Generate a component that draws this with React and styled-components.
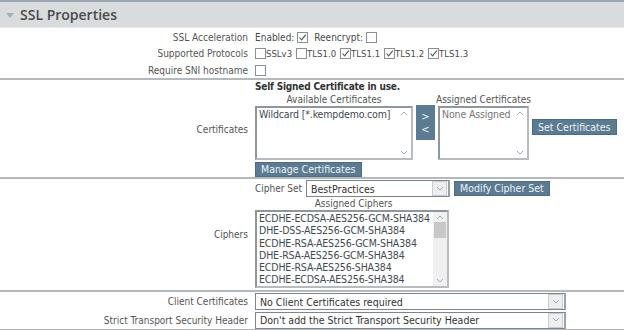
import React from 'react';
import styled, { createGlobalStyle } from 'styled-components';

const Global = createGlobalStyle`
  body {
    margin: 0;
    background: #fff;
    font-family: "DejaVu Sans Condensed", "DejaVu Sans", sans-serif;
    font-size: 10px;
    color: #4a4a4a;
  }
`;

const Panel = styled.div`
  width: 624px;
`;

const Header = styled.div`
  height: 25px;
  border-top: 2px solid #9aa8b3;
  border-bottom: 1px solid #e8ecec;
  background: #d9dcdc;
  display: flex;
  align-items: center;
  gap: 6px;
  padding-left: 6px;
  font-family: "Open Sans", sans-serif;
  font-size: 14px;
  font-weight: 600;
  color: #4a4a4a;
`;

const Tri = styled.span`
  width: 0;
  height: 0;
  border-left: 4px solid transparent;
  border-right: 4px solid transparent;
  border-top: 5px solid #a9adb0;
  margin-top: 1px;
`;

const Section = styled.div`
  border-bottom: 2px solid #b3b9bd;
  padding: ${p => p.$pad || '0'};
`;

const Row = styled.div`
  display: grid;
  grid-template-columns: 248px 1fr;
  column-gap: 7px;
  align-items: center;
  min-height: ${p => p.$h || 16}px;
`;

const Label = styled.div`
  text-align: right;
  color: #555;
  white-space: nowrap;
`;

const Inline = styled.div`
  display: flex;
  align-items: ${p => p.$top ? 'flex-start' : 'center'};
  gap: ${p => p.$gap || 0}px;
  margin-top: ${p => p.$mt || 0}px;
`;

const Box = styled.span`
  display: inline-flex;
  width: 11px;
  height: 11px;
  border: 1px solid #8a8f93;
  background: #fff;
  box-sizing: border-box;
  margin-right: ${p => p.$mr || 0}px;
  align-items: center;
  justify-content: center;
`;

const Opt = styled.span`
  display: inline-flex;
  align-items: flex-end;
  margin-right: 4px;
  font-size: 9.5px;
`;

const Check = ({ on, mr }) => (
  <Box $mr={mr}>
    {on && (
      <svg width="9" height="9" viewBox="0 0 9 9">
        <path d="M1.5 4.5 L3.6 6.8 L7.8 1.6" fill="none" stroke="#555" strokeWidth="1.1" />
      </svg>
    )}
  </Box>
);

const Col = styled.div`
  display: flex;
  flex-direction: column;
  align-items: ${p => p.$align || 'stretch'};
`;

const Bold = styled.div`
  font-weight: bold;
  color: #333;
  height: 12px;
  line-height: 12px;
  letter-spacing: -0.2px;
`;

const Caption = styled.div`
  text-align: center;
  height: 13px;
  line-height: 13px;
  color: #555;
  white-space: nowrap;
  margin: 0 -10px;
`;

const ListBox = styled.div`
  width: ${p => p.$w}px;
  height: ${p => p.$h}px;
  border: 2px solid #8e979e;
  border-right-color: #b6bcc0;
  border-bottom-color: #b6bcc0;
  box-sizing: border-box;
  display: flex;
  background: #fff;
`;

const ListItems = styled.div`
  flex: 1;
  padding: 0 2px;
  font-size: 10.5px;
  line-height: 12.3px;
  letter-spacing: -0.15px;
  color: ${p => p.$muted ? '#777' : '#3f4a52'};
  white-space: nowrap;
  overflow: hidden;
`;

const Scroll = styled.div`
  width: 14px;
  display: flex;
  flex-direction: column;
  justify-content: space-between;
  align-items: center;
  padding: 2px 0;
  background: ${p => p.$track ? '#f0f0f0' : '#fff'};
`;

const Thumb = styled.div`
  width: 12px;
  height: 16px;
  background: #c8c8c8;
  margin-top: 2px;
`;

const Chev = ({ up }) => (
  <svg width="8" height="6" viewBox="0 0 8 6">
    <path d={up ? 'M1 5 L4 2 L7 5' : 'M1 1 L4 4 L7 1'} fill="none" stroke="#a8a8a8" strokeWidth="1" />
  </svg>
);

const Button = styled.button`
  height: ${p => p.$h || 15}px;
  padding: 0 5px;
  border: 1px solid #4d6c83;
  background: #5b7b93;
  color: #eef2f4;
  font-family: "DejaVu Sans Condensed", "DejaVu Sans", sans-serif;
  font-size: 10.5px;
  line-height: 1;
  margin: ${p => p.$m || '0'};
  white-space: nowrap;
`;

const Arrows = styled.div`
  width: 19px;
  height: 35px;
  background: #5b7b93;
  color: #eef2f4;
  display: flex;
  flex-direction: column;
  align-items: center;
  justify-content: center;
  font-size: 11px;
  line-height: 13px;
  margin: 12px 3px 0 3px;
`;

const Select = styled.div`
  width: ${p => p.$w}px;
  height: 17px;
  box-sizing: border-box;
  border: 1px solid #7d868d;
  border-right: 2px solid #9aa2a8;
  display: flex;
  align-items: center;
  background: #fff;
`;

const SelectText = styled.div`
  flex: 1;
  padding-left: 4px;
  font-size: 10.5px;
  color: #333;
  white-space: nowrap;
  overflow: hidden;
`;

const DropBtn = styled.div`
  width: 13px;
  height: 13px;
  margin-right: 1px;
  border: 1px solid #c9cdd0;
  background: #eceeef;
  display: flex;
  align-items: center;
  justify-content: center;
`;

const Dropdown = ({ w, text }) => (
  <Select $w={w}>
    <SelectText>{text}</SelectText>
    <DropBtn><Chev /></DropBtn>
  </Select>
);

const ciphers = [
  'ECDHE-ECDSA-AES256-GCM-SHA384',
  'DHE-DSS-AES256-GCM-SHA384',
  'ECDHE-RSA-AES256-GCM-SHA384',
  'DHE-RSA-AES256-GCM-SHA384',
  'ECDHE-RSA-AES256-SHA384',
  'ECDHE-ECDSA-AES256-SHA384',
];

const protocols = [
  ['SSLv3', false],
  ['TLS1.0', false],
  ['TLS1.1', true],
  ['TLS1.2', true],
  ['TLS1.3', true],
];

export default function App() {
  return (
    <>
      <Global />
      <Panel>
        <Header><Tri />SSL Properties</Header>

        <Section $pad="1px 0 0">
          <Row $h={16}>
            <Label>SSL Acceleration</Label>
            <Inline>
              Enabled:&nbsp;<Check on mr={6} />Reencrypt:&nbsp;<Check />
            </Inline>
          </Row>
          <Row $h={17}>
            <Label>Supported Protocols</Label>
            <Inline>
              {protocols.map(([name, on]) => (
                <Opt key={name}><Check on={on} />{name}</Opt>
              ))}
            </Inline>
          </Row>
          <Row $h={16}>
            <Label>Require SNI hostname</Label>
            <Inline><Check /></Inline>
          </Row>
        </Section>

        <Section $pad="1px 0 0">
          <Row>
            <Label>Certificates</Label>
            <Col>
              <Bold>Self Signed Certificate in use.</Bold>
              <Inline $top>
                <Col>
                  <Caption>Available Certificates</Caption>
                  <ListBox $w={158} $h={54}>
                    <ListItems>Wildcard [*.kempdemo.com]</ListItems>
                    <Scroll><Chev up /><Chev /></Scroll>
                  </ListBox>
                </Col>
                <Arrows><span>&gt;</span><span>&lt;</span></Arrows>
                <Col>
                  <Caption>Assigned Certificates</Caption>
                  <ListBox $w={91} $h={54}>
                    <ListItems $muted>None Assigned</ListItems>
                    <Scroll><Chev up /><Chev /></Scroll>
                  </ListBox>
                </Col>
                <Button $h={16} $m="26px 0 0 3px">Set Certificates</Button>
              </Inline>
              <Inline $mt={2}>
                <Button $h={15}>Manage Certificates</Button>
              </Inline>
            </Col>
          </Row>
        </Section>

        <Section $pad="1px 0 2px">
          <Row>
            <Label>Ciphers</Label>
            <Col $align="flex-start">
              <Inline $gap={4}>
                <Label>Cipher Set</Label>
                <Dropdown w={144} text="BestPractices" />
                <Button $h={15}>Modify Cipher Set</Button>
              </Inline>
              <Caption style={{ width: 193, paddingLeft: 12 }}>Assigned Ciphers</Caption>
              <ListBox $w={194} $h={78}>
                <ListItems>
                  {ciphers.map(c => <div key={c}>{c}</div>)}
                </ListItems>
                <Scroll $track>
                  <Col $align="center">
                    <Chev up />
                    <Thumb />
                  </Col>
                  <Chev />
                </Scroll>
              </ListBox>
            </Col>
          </Row>
        </Section>

        <Section $pad="0">
          <Row $h={19}>
            <Label>Client Certificates</Label>
            <Dropdown w={311} text="No Client Certificates required" />
          </Row>
          <Row $h={18}>
            <Label>Strict Transport Security Header</Label>
            <Dropdown w={311} text="Don't add the Strict Transport Security Header" />
          </Row>
        </Section>
      </Panel>
    </>
  );
}
